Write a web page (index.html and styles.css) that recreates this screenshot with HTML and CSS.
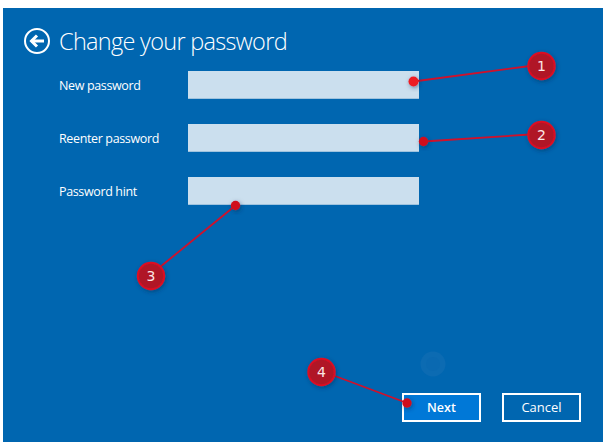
FILE: index.html
```html
<!DOCTYPE html>
<html lang="en">
<head>
<meta charset="utf-8">
<title>Change your password</title>
<link rel="stylesheet" href="styles.css">
</head>
<body>
<main class="panel">
  <header class="header">
    <svg class="back" width="28" height="28" viewBox="0 0 28 28" aria-hidden="true">
      <circle cx="14" cy="14" r="12" fill="none" stroke="#fff" stroke-width="2"/>
      <path d="M8 14H21" fill="none" stroke="#fff" stroke-width="3"/>
      <path d="M14 8.5L8.5 14L14 19.5" fill="none" stroke="#fff" stroke-width="3"/>
    </svg>
    <h1 class="title">Change your password</h1>
  </header>
  <form class="fields">
    <label class="row"><span class="label">New password</span><span class="input"></span></label>
    <label class="row"><span class="label">Reenter password</span><span class="input"></span></label>
    <label class="row"><span class="label">Password hint</span><span class="input"></span></label>
  </form>
  <div class="actions">
    <span class="btn btn-next">Next</span>
    <span class="btn">Cancel</span>
  </div>
</main>
<svg class="overlay" width="607" height="446" viewBox="0 0 607 446">
  <defs>
    <filter id="sh" x="-50%" y="-50%" width="200%" height="200%">
      <feDropShadow dx="1" dy="1.5" stdDeviation="2" flood-color="#00264d" flood-opacity=".5"/>
    </filter>
  </defs>
  <circle class="ghost" cx="433" cy="364" r="12.5"/>
  <circle class="ghost-in" cx="433" cy="364" r="7"/>
  <g class="lines">
    <line x1="413.5" y1="81.5" x2="530" y2="66"/>
    <line x1="423.5" y1="141.5" x2="530" y2="134.5"/>
    <line x1="235.5" y1="205.5" x2="160" y2="267"/>
    <line x1="407" y1="403" x2="335" y2="376"/>
  </g>
  <circle class="dot dot-light" cx="413.5" cy="81.5" r="5"/>
  <circle class="dot" cx="423.5" cy="141.5" r="4.7"/>
  <circle class="dot" cx="235.5" cy="205.5" r="4.7"/>
  <circle class="dot" cx="407" cy="403" r="4.7"/>
  <g class="badge"><circle cx="541.5" cy="66" r="13.2"/><text x="541.5" y="71">1</text></g>
  <g class="badge"><circle cx="541.5" cy="135" r="13.2"/><text x="541.5" y="140">2</text></g>
  <g class="badge"><circle cx="151" cy="276" r="13.2"/><text x="151" y="281">3</text></g>
  <g class="badge"><circle cx="321.5" cy="372" r="13.2"/><text x="321.5" y="377">4</text></g>
</svg>
</body>
</html>
```
FILE: styles.css
```css
html, body {
  margin: 0;
  padding: 0;
  background: #fff;
}
body {
  position: relative;
  width: 607px;
  height: 446px;
  overflow: hidden;
  padding: 8px 4px 4px 3px;
  box-sizing: border-box;
  font-family: "Open Sans", "Noto Sans", sans-serif;
  color: #fff;
}
.panel {
  width: 600px;
  height: 433.5px;
  background: #0066b0;
  position: relative;
  box-sizing: border-box;
  padding: 19px 22px 20px 20px;
  display: flex;
  flex-direction: column;
}
.header {
  display: flex;
  align-items: center;
  gap: 8px;
  height: 28px;
}
.back { flex: none; }
.title {
  margin: 0;
  font-size: 23.5px;
  font-weight: 300;
  letter-spacing: -0.7px;
  line-height: 28px;
  white-space: nowrap;
}
.fields {
  display: flex;
  flex-direction: column;
  gap: 25px;
  margin-top: 16px;
  padding-left: 36px;
}
.row {
  display: flex;
  align-items: center;
  height: 28px;
}
.label {
  width: 129px;
  font-size: 12.5px;
  letter-spacing: -0.36px;
  line-height: 30px;
  padding-top: 2px;
  box-sizing: border-box;
  white-space: nowrap;
}
.input {
  display: block;
  width: 230.5px;
  height: 28px;
  background: #cbdfee;
  box-shadow: inset 0 -1px 0 #9fc3de;
}
.actions {
  display: flex;
  justify-content: flex-end;
  gap: 21px;
  margin-top: auto;
}
.btn {
  width: 79px;
  height: 29px;
  box-sizing: border-box;
  border: 2px solid #fff;
  display: flex;
  align-items: center;
  justify-content: center;
  font-size: 13px;
  font-weight: 400;
}
.btn-next {
  background: #0078d7;
  font-size: 12.5px;
  font-weight: 600;
}
.overlay {
  position: absolute;
  left: 0;
  top: 0;
  pointer-events: none;
}
.ghost { fill: #0c6bb2; }
.ghost-in { fill: #0a69b1; }
.lines line {
  stroke: #d0112b;
  stroke-width: 1.8;
}
.dot { fill: #d0101f; filter: url(#sh); }
.dot-light { fill: #ed1c24; }
.badge circle {
  fill: #b01628;
  stroke: #dc0f22;
  stroke-width: 2;
  filter: url(#sh);
}
.badge text {
  fill: #fbe6e6;
  font-family: "DejaVu Sans", sans-serif;
  font-size: 14px;
  text-anchor: middle;
}
```
